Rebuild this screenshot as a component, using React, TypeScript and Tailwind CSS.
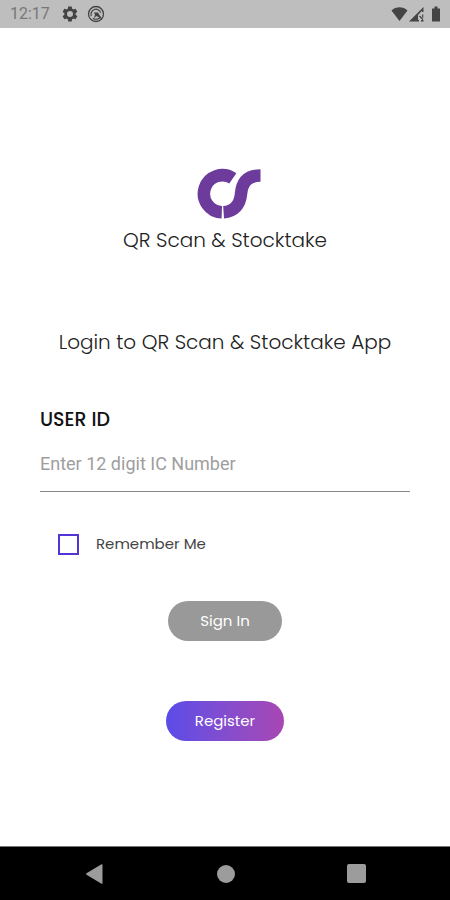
import React from 'react';

function StatusBar() {
  return (
    <header className="flex h-7 items-center justify-between bg-[#bebebe] pl-2.5 pr-2 text-[#444]">
      <div className="flex items-center">
        <span className="w-[51px] font-[Roboto,sans-serif] text-base leading-7 text-[#777]">12:17</span>
        <svg className="h-[18px] w-[18px]" viewBox="0 0 24 24" fill="currentColor" aria-hidden="true">
          <path d="M19.4 13c.1-.3.1-.7.1-1s0-.7-.1-1l2.1-1.6c.2-.2.2-.4.1-.6l-2-3.5c-.1-.2-.4-.3-.6-.2l-2.5 1c-.5-.4-1.1-.7-1.7-1l-.4-2.6c0-.2-.2-.5-.4-.5h-4c-.3 0-.5.2-.5.5l-.4 2.6c-.6.3-1.2.6-1.7 1l-2.5-1c-.2-.1-.5 0-.6.2l-2 3.5c-.1.2 0 .4.1.6L4.5 11a8 8 0 0 0 0 2l-2.1 1.600c-.2.2-.2.4-.1.6l2 3.5c.1.2.4.3.6.2l2.5-1c.5.4 1.1.7 1.7 1l.4 2.6c0 .3.2.5.5.5h4c.2 0 .4-.2.4-.5l.4-2.6c.6-.3 1.200-.6 1.700-1l2.500 1c.2.1.5 0 .6-.2l2-3.500c.1-.2.1-.4-.1-.6zM12 16a4 4 0 1 1 0-8 4 4 0 0 1 0 8z" />
        </svg>
        <svg className="ml-2 h-[18px] w-[18px]" viewBox="0 0 18 18" fill="none" stroke="currentColor" aria-hidden="true">
          <circle cx="9" cy="9" r="7.500" strokeWidth="1.300" />
          <path d="M4.300 11A5 5 0 0 1 13.700 7.500M13.500 11.500A5 5 0 0 1 6 13.200" strokeWidth="1.200" />
          <path d="M7 7.500h4l2 3.500-1.500 1-2-1-2.500 2 1-3z" fill="currentColor" stroke="none" />
          <path d="m11 10.500 4 3.500" strokeWidth="1.200" />
        </svg>
      </div>
      <svg className="h-4 w-[52px]" viewBox="0 0 52 16" fill="currentColor" aria-hidden="true">
        <path d="M1.500 4.500C6 .2 13 .2 17.500 4.500L9.500 15z" />
        <path d="M19 15.500 33.500 1v5H32V4.800L28 9v5h1v1.500z" />
        <path d="m29.500 10 3.500 3.500M32.700 8.500v3" stroke="currentColor" strokeWidth="1.200" />
        <path d="M31 14h2.500v1.500H31z" />
        <path d="M42 2.500h2.500V.5h3v2H50v13h-8z" />
      </svg>
    </header>
  );
}

function Logo() {
  return (
    <svg className="h-[52px] w-16" viewBox="0 0 64 52" fill="none" stroke="#6c3b9c" strokeWidth="12.500" role="img" aria-label="CS">
      <path d="M35.800 10.400A18.500 18.500 0 1 0 24.800 44.200" />
      <path d="M26.600 44.200C37 43.500 43 37 44 26C45 14 51 7.500 63.500 7.500" />
    </svg>
  );
}

function NavigationBar() {
  return (
    <nav className="flex h-[54px] items-center justify-between border-t border-[#777] bg-black px-[84px] text-[#9c9c9c]">
      <button type="button" aria-label="Back">
        <svg className="block h-5 w-5" viewBox="0 0 20 20" fill="currentColor">
          <path d="M18.500 .8v18.400c0 .6-.5.800-1 .5L2.500 10.700c-.5-.4-.5-1 0-1.400L17.500 .3c.5-.3 1-.1 1 .5z" />
        </svg>
      </button>
      <button type="button" aria-label="Home" className="h-[18px] w-[18px] rounded-full bg-[#9c9c9c]" />
      <button type="button" aria-label="Recent apps" className="h-[19px] w-[19px] rounded-xs bg-[#9c9c9c]" />
    </nav>
  );
}

export default function App() {
  return (
    <div className="flex min-h-screen flex-col bg-white font-[Poppins,Inter,sans-serif] text-[#222]">
      <StatusBar />
      <main className="flex flex-1 flex-col px-10 pt-[140px]">
        <div className="flex flex-col items-center">
          <div className="pl-2">
            <Logo />
          </div>
          <p className="mt-1 text-xl leading-8 font-light">QR Scan &amp; Stocktake</p>
        </div>
        <h1 className="mt-[70px] text-center text-xl leading-8 font-light">Login to QR Scan &amp; Stocktake App</h1>
        <form className="mt-[46px] flex flex-col" onSubmit={(e) => e.preventDefault()}>
          <label htmlFor="user-id" className="text-[19px] leading-8 font-medium text-[#111]">USER ID</label>
          <input
            id="user-id"
            type="text"
            inputMode="numeric"
            placeholder="Enter 12 digit IC Number"
            className="h-14 w-full border-b border-[#888] font-[Roboto,sans-serif] text-lg outline-none placeholder:text-[#9e9e9e]"
          />
          <div className="mt-10 flex items-center gap-[17px] pl-[18px]">
            <input id="remember" type="checkbox" className="h-[21px] w-[21px] appearance-none border-2 border-[#5434d4] bg-white checked:bg-[#5434d4]" />
            <label htmlFor="remember" className="text-[15px] leading-6 text-[#444]">Remember Me</label>
          </div>
          <button type="submit" className="mt-[45px] h-10 self-center rounded-full bg-[#999] px-8 text-[15px] text-white">Sign In</button>
          <button type="button" className="mt-[60px] h-10 self-center rounded-full bg-linear-to-r from-[#5b4be8] to-[#a846b4] px-[29px] text-[15px] text-white">Register</button>
        </form>
      </main>
      <NavigationBar />
    </div>
  );
}
